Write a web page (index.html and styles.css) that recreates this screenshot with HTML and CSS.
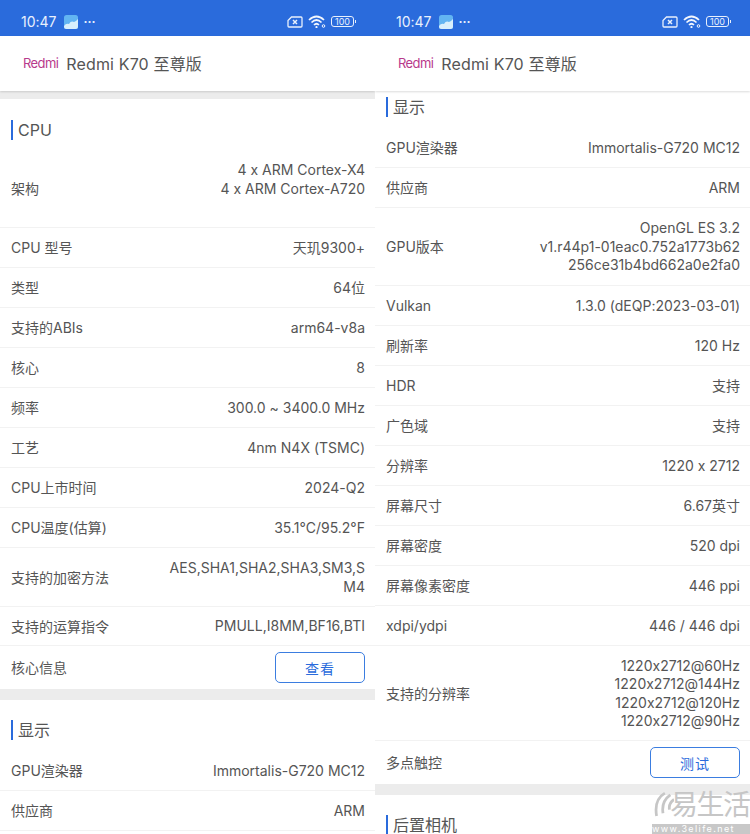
FILE: index.html
```html
<!DOCTYPE html>
<html lang="zh-CN">
<head>
<meta charset="UTF-8" />
<meta name="viewport" content="width=device-width, initial-scale=1" />
<title>Redmi K70 至尊版</title>
<link rel="stylesheet" href="styles.css">
</head>
<body>
<div class="screens">

  <!-- 左屏 -->
  <div class="phone">
    <div class="status-bar">
      <span class="time">10:47</span>
      <svg class="weather" viewBox="0 0 14 14"><rect width="14" height="14" rx="2.5" fill="#62b4f2"/><path d="M0 11 Q2 8 5 9 Q7 5.5 10 7 Q12 6.5 14 4 V11.5 Q14 14 11.5 14 H2.5 Q0 14 0 11.5Z" fill="#d9effc"/></svg>
      <span class="more">···</span>
      <span class="status-right">
        <svg class="sim" viewBox="0 0 16 12"><path d="M4.5 1 H14 Q15 1 15 2 V10 Q15 11 14 11 H2 Q1 11 1 10 V4.5Z" fill="none" stroke="#e8f0fc" stroke-width="1.3"/><path d="M6 4 L10 8 M10 4 L6 8" stroke="#e8f0fc" stroke-width="1.5"/></svg>
        <svg class="wifi" viewBox="0 0 18 13"><path d="M1 5 Q8.5 -2 16 5 M3.5 7.5 Q8.5 2.5 13.5 7.5 M6 10 Q8.5 7.5 11 10" fill="none" stroke="#f2f6fd" stroke-width="1.7"/><circle cx="8.5" cy="12" r="1.1" fill="#f2f6fd"/><circle cx="15.5" cy="11" r="1.3" fill="none" stroke="#f2f6fd"/></svg>
        <span class="battery"><span class="battery-num">100</span></span>
      </span>
    </div>
    <div class="app-header">
      <span class="brand">Redmi</span>
      <span class="model">Redmi K70 至尊版</span>
    </div>
    <div class="gap gap-top"></div>

    <h3 class="section-title section-first"><span>CPU</span></h3>
    <div class="row row-tall"><span class="key">架构</span><span class="val">4 x ARM Cortex-X4<br>4 x ARM Cortex-A720<br>&nbsp;</span></div>
    <div class="row"><span class="key">CPU 型号</span><span class="val">天玑9300+</span></div>
    <div class="row"><span class="key">类型</span><span class="val">64位</span></div>
    <div class="row"><span class="key">支持的ABIs</span><span class="val">arm64-v8a</span></div>
    <div class="row"><span class="key">核心</span><span class="val">8</span></div>
    <div class="row"><span class="key">频率</span><span class="val">300.0 ~ 3400.0 MHz</span></div>
    <div class="row"><span class="key">工艺</span><span class="val">4nm N4X (TSMC)</span></div>
    <div class="row"><span class="key">CPU上市时间</span><span class="val">2024-Q2</span></div>
    <div class="row"><span class="key">CPU温度(估算)</span><span class="val">35.1°C/95.2°F</span></div>
    <div class="row row-two"><span class="key">支持的加密方法</span><span class="val">AES,SHA1,SHA2,SHA3,SM3,S<br>M4</span></div>
    <div class="row row-short"><span class="key">支持的运算指令</span><span class="val">PMULL,I8MM,BF16,BTI</span></div>
    <div class="row row-btn"><span class="key">核心信息</span><button class="btn">查看</button></div>
    <div class="gap"></div>

    <h3 class="section-title"><span>显示</span></h3>
    <div class="row"><span class="key">GPU渲染器</span><span class="val">Immortalis-G720 MC12</span></div>
    <div class="row"><span class="key">供应商</span><span class="val">ARM</span></div>
  </div>

  <!-- 右屏 -->
  <div class="phone">
    <div class="status-bar">
      <span class="time">10:47</span>
      <svg class="weather" viewBox="0 0 14 14"><rect width="14" height="14" rx="2.5" fill="#62b4f2"/><path d="M0 11 Q2 8 5 9 Q7 5.5 10 7 Q12 6.5 14 4 V11.5 Q14 14 11.5 14 H2.5 Q0 14 0 11.5Z" fill="#d9effc"/></svg>
      <span class="more">···</span>
      <span class="status-right">
        <svg class="sim" viewBox="0 0 16 12"><path d="M4.5 1 H14 Q15 1 15 2 V10 Q15 11 14 11 H2 Q1 11 1 10 V4.5Z" fill="none" stroke="#e8f0fc" stroke-width="1.3"/><path d="M6 4 L10 8 M10 4 L6 8" stroke="#e8f0fc" stroke-width="1.5"/></svg>
        <svg class="wifi" viewBox="0 0 18 13"><path d="M1 5 Q8.5 -2 16 5 M3.5 7.5 Q8.5 2.5 13.5 7.5 M6 10 Q8.5 7.5 11 10" fill="none" stroke="#f2f6fd" stroke-width="1.7"/><circle cx="8.5" cy="12" r="1.1" fill="#f2f6fd"/><circle cx="15.5" cy="11" r="1.3" fill="none" stroke="#f2f6fd"/></svg>
        <span class="battery"><span class="battery-num">100</span></span>
      </span>
    </div>
    <div class="app-header">
      <span class="brand">Redmi</span>
      <span class="model">Redmi K70 至尊版</span>
    </div>

    <h3 class="section-title section-scrolled"><span>显示</span></h3>
    <div class="row"><span class="key">GPU渲染器</span><span class="val">Immortalis-G720 MC12</span></div>
    <div class="row"><span class="key">供应商</span><span class="val">ARM</span></div>
    <div class="row row-three"><span class="key">GPU版本</span><span class="val">OpenGL ES 3.2<br>v1.r44p1-01eac0.752a1773b62<br>256ce31b4bd662a0e2fa0</span></div>
    <div class="row"><span class="key">Vulkan</span><span class="val">1.3.0 (dEQP:2023-03-01)</span></div>
    <div class="row"><span class="key">刷新率</span><span class="val">120 Hz</span></div>
    <div class="row"><span class="key">HDR</span><span class="val">支持</span></div>
    <div class="row"><span class="key">广色域</span><span class="val">支持</span></div>
    <div class="row"><span class="key">分辨率</span><span class="val">1220 x 2712</span></div>
    <div class="row"><span class="key">屏幕尺寸</span><span class="val">6.67英寸</span></div>
    <div class="row"><span class="key">屏幕密度</span><span class="val">520 dpi</span></div>
    <div class="row"><span class="key">屏幕像素密度</span><span class="val">446 ppi</span></div>
    <div class="row"><span class="key">xdpi/ydpi</span><span class="val">446 / 446 dpi</span></div>
    <div class="row row-four"><span class="key">支持的分辨率</span><span class="val">1220x2712@60Hz<br>1220x2712@144Hz<br>1220x2712@120Hz<br>1220x2712@90Hz</span></div>
    <div class="row row-btn"><span class="key">多点触控</span><button class="btn">测试</button></div>
    <div class="gap"></div>

    <h3 class="section-title section-last"><span>后置相机</span></h3>

    <!-- 水印 -->
    <div class="watermark">
      <div class="wm-top">
        <svg class="wm-logo" viewBox="0 0 24 32"><path d="M14 3 Q2 10 5 28 M20 5 Q10 12 12 25 M24 10 Q18 14 19 21" fill="none" stroke="#c6c6c6" stroke-width="3"/></svg>
        <span class="wm-text">易生活</span>
      </div>
      <div class="wm-url">www.3elife.net</div>
    </div>
  </div>

</div>
</body>
</html>
```

FILE: styles.css
```css
* {
  box-sizing: border-box;
}
body {
  margin: 0;
  background: #fff;
  font-family: "Inter", "Noto Sans CJK SC", sans-serif;
  font-feature-settings: "calt" 0;
  color: #555;
}
.screens {
  display: flex;
  width: 750px;
  height: 834px;
  overflow: hidden;
}
.phone {
  position: relative;
  flex: 0 0 375px;
  height: 834px;
  overflow: hidden;
  background: #fff;
}
.status-bar {
  display: flex;
  align-items: center;
  height: 36px;
  padding: 7px 21px 0;
  background: #2a6bdc;
  color: #e8f0fc;
}
.time {
  font-size: 14px;
}
.weather {
  width: 14px;
  height: 14px;
  margin-left: 7px;
}
.more {
  margin-left: 6px;
  font-size: 12px;
  font-weight: bold;
}
.status-right {
  display: flex;
  align-items: center;
  margin-left: auto;
  gap: 5px;
}
.sim {
  width: 16px;
  height: 12px;
}
.wifi {
  width: 18px;
  height: 13px;
}
.battery {
  position: relative;
  display: flex;
  align-items: center;
  justify-content: center;
  width: 23px;
  height: 11px;
  border: 1px solid #e8f0fc;
  border-radius: 3px;
}
.battery::after {
  content: "";
  position: absolute;
  right: -3px;
  top: 3px;
  width: 1px;
  height: 3px;
  background: #e8f0fc;
}
.battery-num {
  font-size: 9px;
  line-height: 9px;
}
.app-header {
  position: relative;
  display: flex;
  align-items: center;
  height: 55px;
  padding: 0 0 2px 23px;
  background: #fff;
  box-shadow: 0 1px 2px rgba(0, 0, 0, 0.14);
}
.brand {
  font-size: 13px;
  color: #b83a8c;
  letter-spacing: -0.6px;
}
.model {
  margin-left: 8px;
  font-size: 16px;
  letter-spacing: 0.15px;
  color: #555;
}
.gap {
  height: 11px;
  background: #ececec;
}
.gap-top {
  height: 8px;
}
.section-title {
  display: flex;
  align-items: center;
  height: 51px;
  margin: 0;
  padding: 9px 0 0 11px;
  font-size: 16px;
  font-weight: 400;
  color: #555;
}
.section-title span {
  padding-left: 5px;
  border-left: 2px solid #2a6bdc;
  line-height: 20px;
}
.section-first {
  height: 50px;
  padding-top: 11px;
}
.section-scrolled {
  height: 37px;
  padding: 0 0 5px 11px;
}
.section-last {
  height: 40px;
  padding-top: 20px;
  line-height: 20px;
}
.row {
  display: flex;
  align-items: center;
  justify-content: space-between;
  height: 40px;
  padding: 1px 10px 0 11px;
  border-bottom: 1px solid #f2f2f2;
  font-size: 14px;
  line-height: 18px;
}
.key {
  white-space: nowrap;
}
.val {
  text-align: right;
  line-height: 18.5px;
  white-space: nowrap;
}
.row-tall {
  height: 79px;
  padding-top: 2px;
}
.row-two {
  height: 59px;
}
.row-short {
  height: 39px;
}
.row-three {
  height: 78px;
}
.row-four {
  height: 95px;
}
.row-btn {
  height: 43px;
  padding-top: 0;
  border-bottom: 0;
}
.btn {
  width: 90px;
  height: 31px;
  padding: 0;
  border: 1px solid #3b7de0;
  border-radius: 5px;
  background: #fff;
  color: #2a6bdc;
  font-family: inherit;
  font-size: 14px;
  letter-spacing: 1px;
}
.watermark {
  position: absolute;
  right: 0;
  bottom: 0;
  width: 98px;
  color: #c6c6c6;
}
.wm-top {
  display: flex;
  align-items: center;
  height: 38px;
}
.wm-logo {
  flex: 0 0 22px;
  width: 22px;
  height: 30px;
}
.wm-text {
  margin-left: -4px;
  font-size: 28px;
  line-height: 34px;
  white-space: nowrap;
  letter-spacing: -1.5px;
}
.wm-url {
  height: 10px;
  background: #c8c8c8;
  color: #fff;
  font-size: 9px;
  line-height: 10px;
  letter-spacing: 1.4px;
  white-space: nowrap;
  overflow: hidden;
}
```
